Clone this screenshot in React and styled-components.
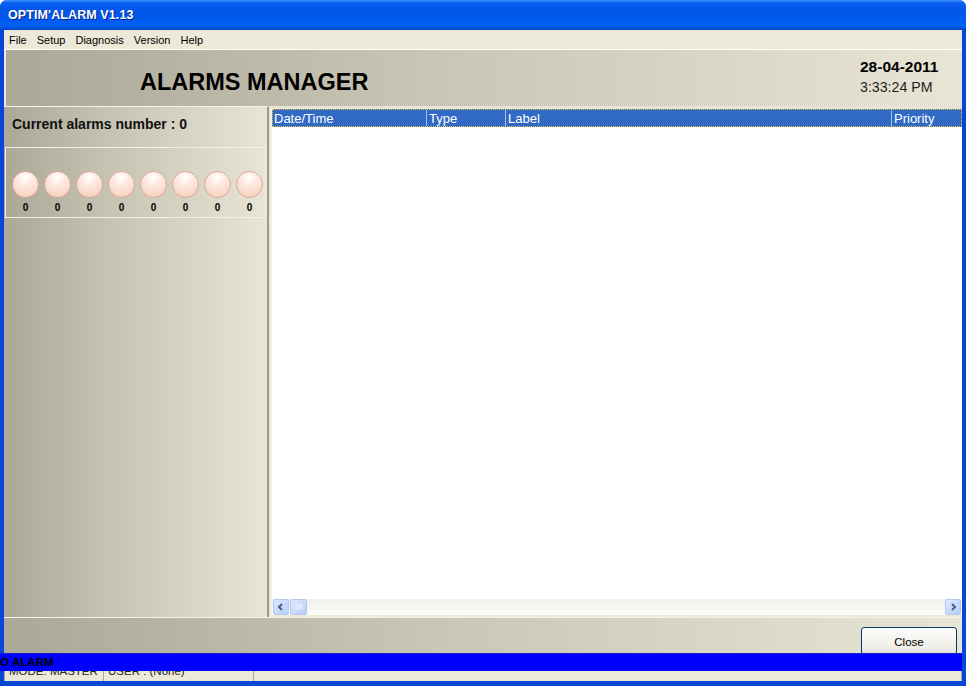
import React from 'react';
import styled, { createGlobalStyle } from 'styled-components';

const GlobalStyle = createGlobalStyle`
  html, body { margin: 0; padding: 0; overflow: hidden; background: #fff; }
  * { box-sizing: border-box; }
`;

const sans = `"Liberation Sans", Arial, sans-serif`;

const Window = styled.div`
  width: 966px;
  height: 686px;
  display: flex;
  flex-direction: column;
  background: #0846d8;
  border-radius: 7px 7px 0 0;
  overflow: hidden;
  font-family: ${sans};
`;

const TitleBar = styled.div`
  height: 30px;
  flex: none;
  display: flex;
  align-items: center;
  padding-left: 8px;
  background: linear-gradient(#3d95ff 0, #0a5ff0 10%, #0055e8 40%, #0260f5 85%, #0a4fd8 95%, #003dc8 100%);
  color: #fff;
  font-weight: bold;
  font-size: 12.5px;
  letter-spacing: 0.1px;
  text-shadow: 1px 1px 0 #0a1e8c;
`;

const Frame = styled.div`
  flex: none;
  margin: 0 4px;
  background: #ece9d8;
  display: flex;
  flex-direction: column;
`;

const MenuBar = styled.div`
  height: 20px;
  display: flex;
  align-items: center;
  border-bottom: 1px solid #fff;
  font-size: 11px;
  color: #000;
`;

const MenuItem = styled.span`
  padding: 0 5px;
`;

const panelGradient = `linear-gradient(90deg, #aca898 0%, #c9c6b5 45%, #e8e5d6 100%)`;

const Header = styled.div`
  height: 56px;
  display: flex;
  align-items: center;
  justify-content: space-between;
  background: ${panelGradient};
  border-left: 2px solid #ece9d8;
`;

const HeaderTitle = styled.h1`
  margin: 0 0 0 134px;
  padding-top: 8px;
  font-size: 23.5px;
  font-weight: bold;
  color: #000;
`;

const Clock = styled.div`
  width: 102px;
  display: flex;
  flex-direction: column;
  gap: 3px;
  padding-bottom: 4px;
`;

const DateText = styled.span`
  font-size: 15.5px;
  font-weight: bold;
  color: #000;
`;

const TimeText = styled.span`
  font-size: 14.2px;
  color: #222;
`;

const Main = styled.div`
  height: 511px;
  display: flex;
  gap: 2px;
`;

const LeftPanel = styled.div`
  width: 265px;
  flex: none;
  background: ${panelGradient};
  border-top: 1px solid #f4f2ea;
  border-right: 2px solid #9c9a8c;
  display: flex;
  flex-direction: column;
`;

const CountLabel = styled.div`
  height: 40px;
  padding: 9px 0 0 8px;
  font-size: 14px;
  font-weight: bold;
  color: #111;
`;

const LedBox = styled.div`
  height: 71px;
  margin: 0 1px;
  border: 1px solid #f2f0e6;
  display: flex;
  align-items: flex-end;
  padding: 0 0 4px 6px;
  gap: 5px;
`;

const Led = styled.div`
  width: 27px;
  display: flex;
  flex-direction: column;
  align-items: center;
  gap: 4px;
`;

const Bulb = styled.div`
  width: 27px;
  height: 27px;
  border-radius: 50%;
  border: 1px solid #d9ab98;
  background: radial-gradient(circle at 50% 22%, #ffffff 0%, #fde9e0 35%, #f6c9b5 100%);
`;

const LedValue = styled.span`
  font-size: 10px;
  font-weight: bold;
  color: #000;
  line-height: 11px;
`;

const ListView = styled.div`
  flex: 1;
  display: flex;
  flex-direction: column;
  background: #fff;
  border-top: 3px solid #e8e5d8;
  border-left: 1px solid #f4f2ea;
  border-bottom: 2px solid #ece9d8;
`;

const ColumnHeader = styled.div`
  height: 18px;
  flex: none;
  display: flex;
  background: #316ac5;
  border: 1px dotted #3a3200;
  outline: 1px dotted #e8c040;
  outline-offset: -1px;
`;

const Column = styled.div`
  width: ${p => p.$w}px;
  flex: ${p => (p.$w ? 'none' : 1)};
  padding-left: ${p => (p.$first ? 1 : 2)}px;
  color: #fff;
  font-size: 13px;
  line-height: 18px;
  white-space: nowrap;
  overflow: hidden;
  border-left: ${p => (p.$first ? 'none' : '1px solid #a9bfe6')};
`;

const Rows = styled.div`
  flex: 1;
`;

const HScroll = styled.div`
  height: 16px;
  flex: none;
  display: flex;
  align-items: center;
  padding: 0 1px;
  background: linear-gradient(#f1f0ea, #fbfbf8);
`;

const ScrollButton = styled.div`
  width: 16px;
  height: 16px;
  flex: none;
  display: flex;
  align-items: center;
  justify-content: center;
  border: 1px solid #b4c6f2;
  border-radius: 2px;
  background: linear-gradient(135deg, #dde8ff, #b9cdf8);
`;

const Thumb = styled(ScrollButton)`
  width: 17px;
  margin-left: 1px;
`;

const Spacer = styled.div`
  flex: 1;
`;

const BottomPanel = styled.div`
  height: 36px;
  display: flex;
  justify-content: flex-end;
  align-items: flex-end;
  padding-right: 5px;
  background: ${panelGradient};
  border-top: 1px solid #f4f2ea;
  overflow: hidden;
`;

const CloseButton = styled.button`
  width: 96px;
  height: 28px;
  margin-bottom: -2px;
  border: 1px solid #003c74;
  border-radius: 3px;
  background: linear-gradient(#fefefe, #f0efe9 70%, #e3e1d8);
  font-family: ${sans};
  font-size: 11.5px;
  color: #000;
  padding: 1px 0 0;
`;

const AlarmTicker = styled.div`
  height: 18px;
  flex: none;
  margin-right: 4px;
  background: #0000ff;
  border-top: 1px solid #1b1bc8;
  overflow: hidden;
  white-space: nowrap;
  font-size: 11.5px;
  font-weight: 700;
  line-height: 17px;
  text-indent: -8px;
  color: #000;
`;

const StatusBar = styled.div`
  height: 10px;
  flex: none;
  margin: 0 4px;
  display: flex;
  background: #ece9d8;
  overflow: hidden;
  font-size: 11.5px;
  color: #222;
`;

const StatusCell = styled.div`
  width: ${p => p.$w}px;
  flex: ${p => (p.$w ? 'none' : 1)};
  margin-top: -7px;
  line-height: 14px;
  padding-left: 4px;
  border-right: 1px solid #a8a596;
  border-left: ${p => (p.$first ? '1px solid #a8a596' : 'none')};
`;

const leds = [0, 0, 0, 0, 0, 0, 0, 0];

const columns = [
  { label: 'Date/Time', w: 153 },
  { label: 'Type', w: 79 },
  { label: 'Label', w: 386 },
  { label: 'Priority' },
];

function Arrow({ dir }) {
  const d = dir === 'left' ? 'M7 3 L4 6 L7 9' : 'M5 3 L8 6 L5 9';
  return (
    <svg width="12" height="12" viewBox="0 0 12 12">
      <path d={d} fill="none" stroke="#4d6185" strokeWidth="2" />
    </svg>
  );
}

function Grip() {
  return (
    <svg width="8" height="8" viewBox="0 0 8 8">
      {[1, 3, 5, 7].map(x => (
        <line key={x} x1={x} y1="1" x2={x} y2="7" stroke="#eef3ff" strokeWidth="1" />
      ))}
    </svg>
  );
}

export default function App() {
  return (
    <>
      <GlobalStyle />
      <Window>
        <TitleBar>OPTIM'ALARM V1.13</TitleBar>
        <Frame>
          <MenuBar>
            {['File', 'Setup', 'Diagnosis', 'Version', 'Help'].map(m => (
              <MenuItem key={m}>{m}</MenuItem>
            ))}
          </MenuBar>

          <Header>
            <HeaderTitle>ALARMS MANAGER</HeaderTitle>
            <Clock>
              <DateText>28-04-2011</DateText>
              <TimeText>3:33:24 PM</TimeText>
            </Clock>
          </Header>

          <Main>
            <LeftPanel>
              <CountLabel>Current alarms number : 0</CountLabel>
              <LedBox>
                {leds.map((v, i) => (
                  <Led key={i}>
                    <Bulb />
                    <LedValue>{v}</LedValue>
                  </Led>
                ))}
              </LedBox>
            </LeftPanel>

            <ListView>
              <ColumnHeader>
                {columns.map((c, i) => (
                  <Column key={c.label} $w={c.w} $first={i === 0}>{c.label}</Column>
                ))}
              </ColumnHeader>
              <Rows />
              <HScroll>
                <ScrollButton><Arrow dir="left" /></ScrollButton>
                <Thumb><Grip /></Thumb>
                <Spacer />
                <ScrollButton><Arrow dir="right" /></ScrollButton>
              </HScroll>
            </ListView>
          </Main>

          <BottomPanel>
            <CloseButton>Close</CloseButton>
          </BottomPanel>
        </Frame>

        <AlarmTicker>NO ALARM</AlarmTicker>
        <StatusBar>
          <StatusCell $w={100} $first>MODE: MASTER</StatusCell>
          <StatusCell $w={150}>USER : (None)</StatusCell>
          <StatusCell />
        </StatusBar>
      </Window>
    </>
  );
}
